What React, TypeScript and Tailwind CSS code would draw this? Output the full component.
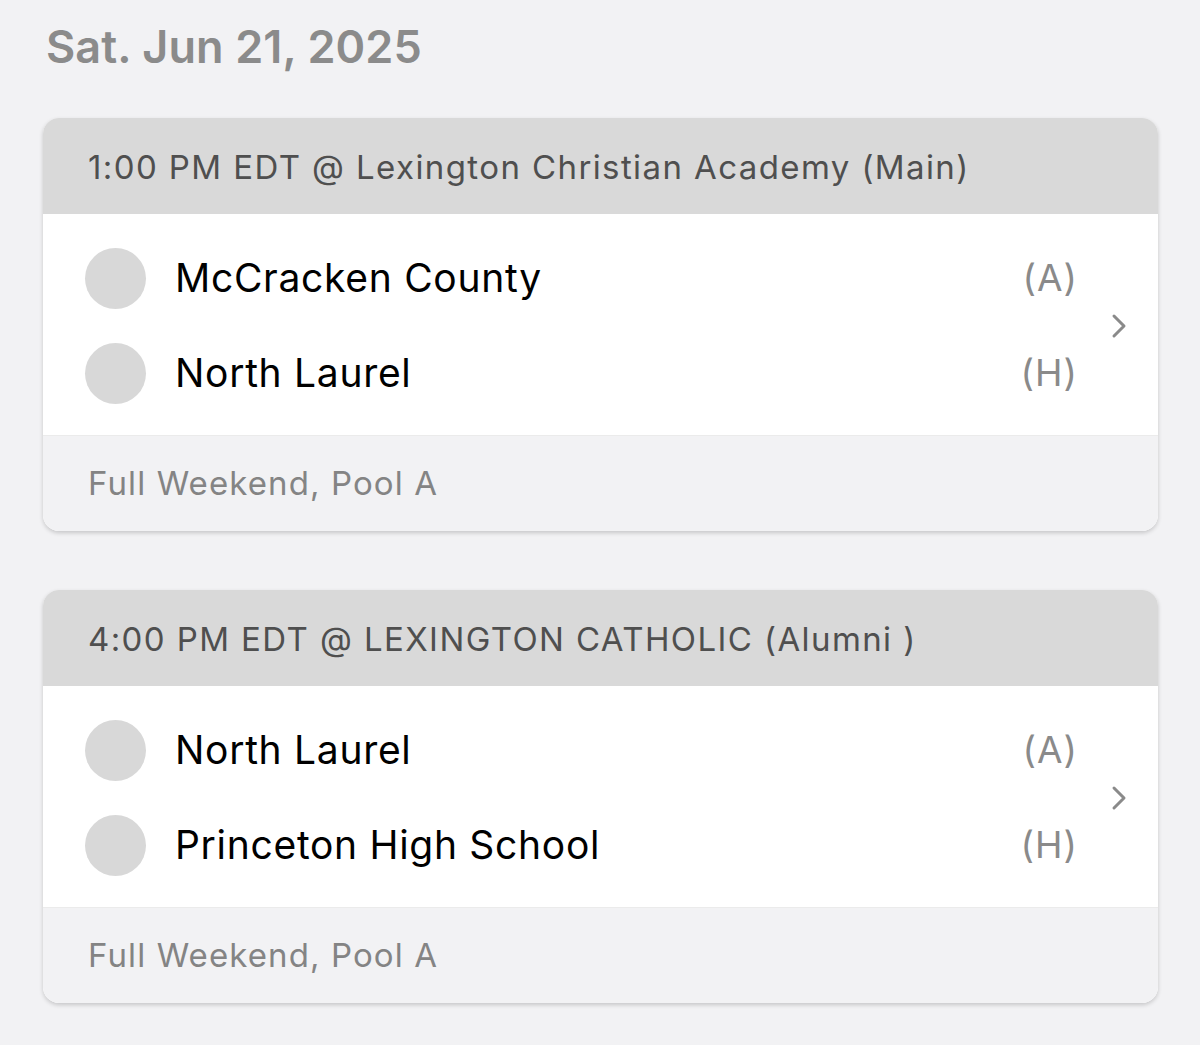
const games = [
  {
    header: "1:00 PM EDT @ Lexington Christian Academy (Main)",
    teams: [
      { name: "McCracken County", side: "(A)" },
      { name: "North Laurel", side: "(H)" },
    ],
    footer: "Full Weekend, Pool A",
  },
  {
    header: "4:00 PM EDT @ LEXINGTON CATHOLIC (Alumni )",
    teams: [
      { name: "North Laurel", side: "(A)" },
      { name: "Princeton High School", side: "(H)" },
    ],
    footer: "Full Weekend, Pool A",
  },
];

function Chevron() {
  return (
    <svg width="18" height="26" viewBox="0 0 18 26" fill="none">
      <path d="M4 3l10 10-10 10" stroke="#8a8a8a" strokeWidth="3" strokeLinecap="round" strokeLinejoin="round" />
    </svg>
  );
}

export default function App() {
  return (
    <div
      className="min-h-[1045px] w-[1200px] bg-[#f2f2f4] pl-[43px] pr-[42px] pt-[19px]"
      style={{ fontFamily: "Inter, 'Noto Sans', sans-serif" }}
    >
      <h1 className="text-[45px] leading-[56px] font-semibold text-[#8b8b8b] tracking-[0.1px] pl-[3px] mb-[43px]">
        Sat. Jun 21, 2025
      </h1>

      <div className="flex flex-col gap-[59px]">
        {games.map((game, i) => (
          <div
            key={i}
            className="rounded-[16px] overflow-hidden bg-white shadow-[0_2px_4px_rgba(0,0,0,0.18)]"
          >
            <div className="h-[96px] bg-[#d9d9d9] flex items-center pl-[45px] pt-[4px] text-[33px] text-[#4f4f4f] tracking-[1.4px]">
              {game.header}
            </div>
            <div className="flex items-center pl-[42px] pr-[30px] pt-[33px] pb-[31px]">
              <div className="flex-1 flex flex-col gap-[33px]">
                {game.teams.map((team) => (
                  <div key={team.name} className="h-[62px] flex items-center">
                    <div className="w-[61px] h-[61px] rounded-full bg-[#d8d8d8] shrink-0" />
                    <div className="ml-[29px] flex-1 text-[39px] text-black tracking-[0.7px]">
                      {team.name}
                    </div>
                    <div className="text-[37px] text-[#8a8a8a] tracking-[1px]">{team.side}</div>
                  </div>
                ))}
              </div>
              <div className="ml-[32px]">
                <Chevron />
              </div>
            </div>
            <div className="h-[96px] bg-[#f2f2f4] flex items-center pl-[45px] text-[33px] text-[#848484] tracking-[1.1px] border-t border-[#ebebeb]">
              {game.footer}
            </div>
          </div>
        ))}
      </div>
    </div>
  );
}
